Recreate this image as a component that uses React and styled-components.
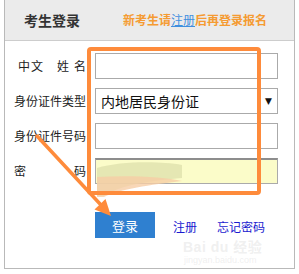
import React from "react";
import styled, { createGlobalStyle } from "styled-components";

const Global = createGlobalStyle`
  html, body { margin: 0; padding: 0; background: #ffffff; }
  body { font-family: "Noto Sans CJK SC", "Liberation Sans", sans-serif; }
`;

const Page = styled.div`
  position: relative;
  width: 299px;
  height: 274px;
  overflow: hidden;
`;

const Panel = styled.div`
  margin-left: 4px;
  width: 289px;
  height: 268px;
  border: 1px solid #b9b9b9;
  border-top: none;
  display: flex;
  flex-direction: column;
`;

const Header = styled.div`
  height: 41px;
  background: #ebebeb;
  border-bottom: 1px solid #cdcdcd;
  display: flex;
  align-items: center;
  padding-left: 19px;
  padding-bottom: 1px;
  box-sizing: border-box;
`;

const Title = styled.div`
  font-size: 14px;
  font-weight: 700;
  color: #333333;
  line-height: 1;
`;

const Notice = styled.div`
  margin-left: 43px;
  font-size: 12px;
  font-weight: 700;
  color: #f59b32;
  line-height: 1;
`;

const NoticeLink = styled.span`
  color: #3f8fdf;
  text-decoration: underline;
  font-weight: 400;
`;

const Form = styled.div`
  padding-top: 12px;
  display: flex;
  flex-direction: column;
  gap: 9px;
`;

const Row = styled.div`
  display: flex;
  align-items: center;
  height: 26px;
`;

const Label = styled.div`
  width: 72px;
  margin-left: 9px;
  margin-right: 9px;
  font-size: 12px;
  color: #222222;
  line-height: 26px;
  text-align: justify;
  text-align-last: justify;
  white-space: nowrap;
  display: flex;
`;

const JustLabel = styled(Label)`
  display: block;
`;

const Char = styled.span`
  margin-left: ${(p) => p.$gap || 0}px;
`;

const Field = styled.div`
  width: 183px;
  height: 26px;
  box-sizing: border-box;
  border: 1px solid #aaaaaa;
  border-top-color: ${(p) => (p.$autofill ? "#8d8d8d" : "#aaaaaa")};
  border-top-width: ${(p) => (p.$autofill ? "2px" : "1px")};
  background: ${(p) => (p.$autofill ? "#fbfcc9" : "#ffffff")};
  display: flex;
  align-items: center;
  justify-content: space-between;
  padding: 0 5px 0 5px;
`;

const SelectText = styled.span`
  font-size: 14px;
  color: #111111;
  line-height: 1;
`;

const Caret = styled.span`
  font-size: 9px;
  color: #111111;
  font-family: "DejaVu Sans", sans-serif;
`;

const Actions = styled.div`
  margin-top: 28px;
  margin-left: 90px;
  display: flex;
  align-items: center;
`;

const Button = styled.div`
  width: 60px;
  height: 26px;
  background: #2f80d0;
  color: #ffffff;
  font-size: 13px;
  display: flex;
  align-items: center;
  justify-content: center;
`;

const Link = styled.span`
  font-size: 12px;
  color: #1a1acf;
  margin-left: ${(p) => p.$gap}px;
  margin-top: 4px;
  line-height: 1;
`;

const Overlay = styled.svg`
  position: absolute;
  left: 0;
  top: 0;
  pointer-events: none;
`;

const Watermark = styled.div`
  position: absolute;
  left: 183px;
  top: 240px;
  color: rgba(215, 215, 215, 0.4);
  font-family: "Liberation Sans", "Noto Sans CJK SC", sans-serif;
  display: flex;
  flex-direction: column;
  align-items: flex-start;
  pointer-events: none;
`;

const WmTop = styled.div`
  font-size: 14px;
  font-weight: 700;
  line-height: 15px;
  letter-spacing: 0.5px;
`;

const WmBottom = styled.div`
  font-size: 9px;
  line-height: 11px;
  margin-left: 1px;
`;

export default function App() {
  return (
    <Page>
      <Global />
      <Panel>
        <Header>
          <Title>考生登录</Title>
          <Notice>
            新考生请<NoticeLink>注册</NoticeLink>后再登录报名
          </Notice>
        </Header>
        <Form>
          <Row>
            <Label>
              <Char $gap={4}>中</Char>
              <Char $gap={1}>文</Char>
              <Char $gap={14}>姓</Char>
              <Char $gap={5}>名</Char>
            </Label>
            <Field />
          </Row>
          <Row>
            <JustLabel>身份证件类型</JustLabel>
            <Field>
              <SelectText>内地居民身份证</SelectText>
              <Caret>▼</Caret>
            </Field>
          </Row>
          <Row>
            <JustLabel>身份证件号码</JustLabel>
            <Field />
          </Row>
          <Row>
            <JustLabel>密码</JustLabel>
            <Field $autofill />
          </Row>
        </Form>
        <Actions>
          <Button>登录</Button>
          <Link $gap={18}>注册</Link>
          <Link $gap={20}>忘记密码</Link>
        </Actions>
      </Panel>

      <Watermark>
        <WmTop>Bai du 经验</WmTop>
        <WmBottom>jingyan.baidu.com</WmBottom>
      </Watermark>

      <Overlay width="299" height="274" viewBox="0 0 299 274">
        <path
          d="M97 168 C 120 161, 160 161, 182 165 L 182 178 C 150 181, 120 185, 104 196 L 97 196 Z"
          fill="rgba(220, 222, 170, 0.7)"
        />
        <path
          d="M97 177 C 130 175, 165 177, 182 181 C 150 185, 120 189, 104 197 L 97 197 Z"
          fill="rgba(246, 205, 165, 0.8)"
        />
        <rect
          x="89"
          y="49"
          width="170"
          height="144"
          rx="2"
          fill="none"
          stroke="#fe8b3b"
          strokeWidth="4"
        />
        <line
          x1="37"
          y1="136"
          x2="101"
          y2="205"
          stroke="#fe8b3b"
          strokeWidth="3.5"
          strokeLinecap="round"
        />
        <polygon points="111,216 94.5,209.5 105.5,199" fill="#fe8b3b" />
      </Overlay>
    </Page>
  );
}
